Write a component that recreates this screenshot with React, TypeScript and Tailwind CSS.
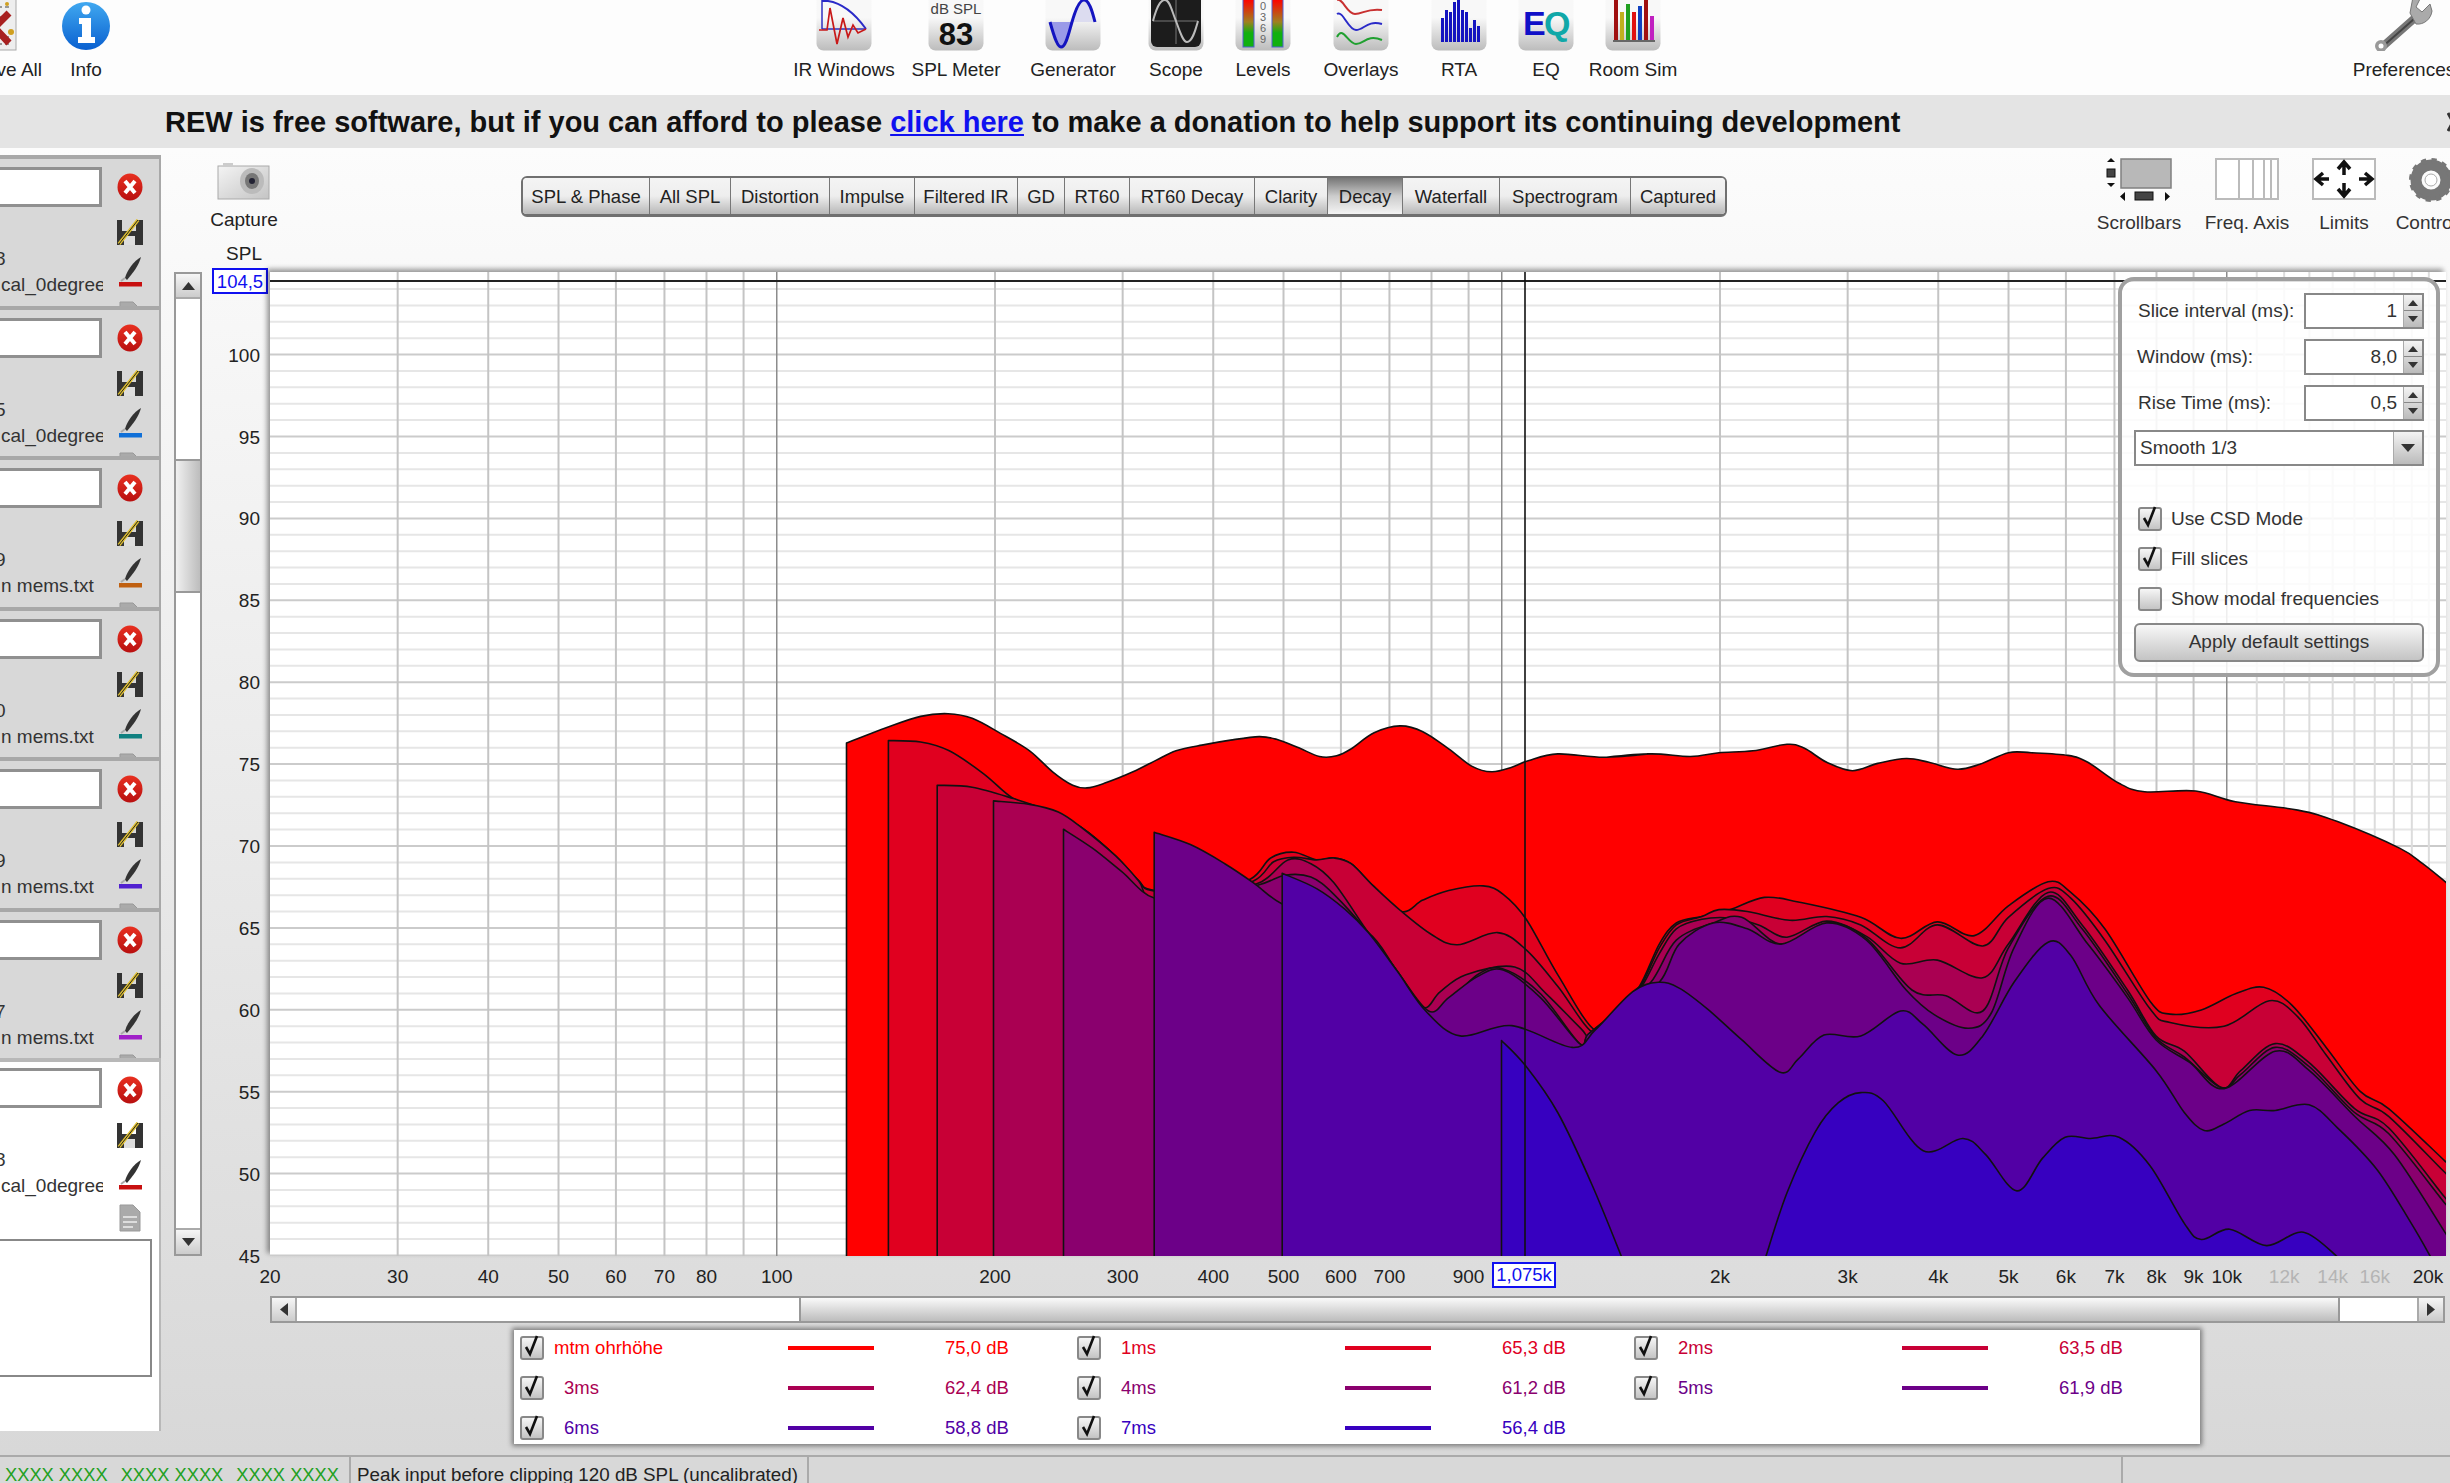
import React from "react";

type P = [number, number];
const a = (l: number[]): P[] => { const r: P[] = []; for (let i = 0; i < l.length; i += 2) r.push([800 + l[i] / 1.742, 680 + l[i + 1] / 2.613]); return r; };
const b = (l: number[]): P[] => { const r: P[] = []; for (let i = 0; i < l.length; i += 2) r.push([1560 + l[i] / 1.762, 680 + l[i + 1] / 2.613]); return r; };
const BOTTOM = 1258;
function smooth(p: P[]) {
  let d = "";
  for (let i = 0; i < p.length - 1; i++) {
    const p0 = p[Math.max(i - 1, 0)], p1 = p[i], p2 = p[i + 1], p3 = p[Math.min(i + 2, p.length - 1)];
    const c1x = p1[0] + (p2[0] - p0[0]) / 6, c1y = p1[1] + (p2[1] - p0[1]) / 6;
    const c2x = p2[0] - (p3[0] - p1[0]) / 6, c2y = p2[1] - (p3[1] - p1[1]) / 6;
    d += `C${c1x.toFixed(1)} ${c1y.toFixed(1)} ${c2x.toFixed(1)} ${c2y.toFixed(1)} ${p2[0].toFixed(1)} ${p2[1].toFixed(1)}`;
  }
  return d;
}
function area(p: P[]) {
  return `M${p[0][0].toFixed(1)} ${BOTTOM}L${p[0][0].toFixed(1)} ${p[0][1].toFixed(1)}${smooth(p)}L${p[p.length - 1][0].toFixed(1)} ${BOTTOM}Z`;
}

const layers: { c: string; p: P[][] }[] = [
  { c: "#ff0000", p: [[...a([81,165,150,125,210,95,258,88,300,100,350,140,400,185,440,240,475,275,500,282,530,270,580,240,620,210,655,185,700,170,750,157,800,148,830,155,870,178,905,200,935,198,960,180,1000,138,1045,120,1085,135,1130,180,1170,225,1205,240,1240,228,1270,210,1320,193,1400,202,1480,193]), ...b([80,202,160,193,230,200,280,190,340,185,400,168,430,178,470,215,515,237,560,218,610,205,650,215,700,233,740,220,790,190,830,190,895,197,930,215,985,270,1030,292,1120,290,1190,318,1300,340,1370,370,1480,440,1520,480,1558,525,1570,540])]] },
  { c: "#e0001f", p: [[...a([154,158,210,162,260,185,320,245,372,310,430,340,490,385,550,460,590,525,612,548,700,560,785,520,820,465,860,450,900,470,930,465,960,480,1000,540,1048,605,1085,575,1130,550,1190,538,1225,560,1265,625,1320,770,1385,915]), ...b([100,860,140,800,175,690,205,635,250,618,300,600,360,568,420,580,530,620,600,675,665,632,730,668,790,590,860,527,900,555,960,650,1040,840,1075,873,1130,862,1190,820,1240,803,1290,850,1350,960,1410,1075,1460,1120,1558,1255,1570,1272])]] },
  { c: "#c80036", p: [[...a([239,275,300,280,372,310,430,340,490,385,550,460,590,525,612,550,700,560,790,525,825,475,860,463,900,470,930,465,960,480,1000,540,1048,605,1100,665,1145,692,1215,660,1265,705,1320,800,1385,925]), ...b([100,860,140,805,175,700,205,640,250,618,280,600,330,605,405,628,470,618,530,640,600,700,665,640,745,695,790,620,860,545,900,570,960,680,1040,860,1075,895,1170,905,1250,838,1300,880,1350,980,1410,1095,1460,1140,1558,1285,1570,1300])]] },
  { c: "#aa0052", p: [[...a([337,316,400,325,450,345,490,385,550,460,590,525,612,570,700,570,800,530,850,470,890,480,930,530,990,660,1040,760,1085,855,1115,815,1160,770,1245,750,1300,820,1360,910,1378,930]), ...b([100,865,140,810,175,715,205,650,250,625,300,622,350,640,400,672,470,630,540,670,600,740,665,732,745,778,790,690,860,555,920,640,1000,810,1050,930,1100,970,1165,1065,1200,1020,1260,950,1320,1000,1400,1120,1460,1170,1558,1350,1570,1370])]] },
  { c: "#8a006e", p: [[...a([459,390,510,440,560,500,617,570,700,570,800,535,845,510,890,515,930,560,990,660,1040,760,1090,865,1120,855,1180,770,1225,755,1290,820,1358,950]), ...b([50,925,100,865,160,790,205,680,270,635,320,620,390,690,470,635,540,675,620,810,680,825,745,865,790,700,860,565,920,650,1000,820,1050,935,1100,985,1165,1065,1200,1030,1260,960,1320,1010,1400,1130,1460,1185,1558,1365,1570,1385])]] },
  { c: "#6c0088", p: [[...a([617,398,680,430,740,480,790,530,840,585,900,600,990,660,1040,760,1095,865,1130,830,1180,775,1225,758,1290,830,1358,950]), ...b([50,925,100,870,175,790,210,690,270,635,330,650,390,690,470,635,540,680,610,810,660,875,720,910,760,870,800,700,860,570,930,690,1000,830,1050,940,1110,1000,1170,1068,1260,970,1320,1020,1400,1140,1470,1240,1558,1440,1570,1470])]] },
  { c: "#5200a5", p: [[...a([840,505,900,545,950,600,990,660,1040,760,1090,865,1150,930,1240,903,1345,960,1385,915,1450,815,1495,790]), ...b([210,805,260,860,320,940,388,1025,420,990,465,928,530,930,600,865,640,900,700,980,745,930,800,790,860,685,900,720,950,850,1050,1020,1100,1130,1135,1177,1170,1160,1215,1125,1260,1125,1320,1110,1370,1170,1440,1280,1500,1420,1535,1510])]] },
  { c: "#3700c0", p: [a([1222,942,1265,1010,1320,1130,1380,1320,1432,1510]), b([362,1510,400,1340,450,1180,490,1105,530,1078,570,1100,640,1230,710,1198,750,1240,805,1335,850,1250,890,1195,935,1198,985,1195,1040,1270,1100,1420,1130,1462,1180,1435,1245,1478,1310,1443,1372,1510])] },
];

const X0 = 270, PW = 725;
const xf = (f: number) => X0 + PW * Math.log10(f / 20);
const yd = (d: number) => 1255.5 - (d - 45) * 16.38;
const freqs = [30,40,50,60,70,80,90,100,200,300,400,500,600,700,800,900,1000,2000,3000,4000,5000,6000,7000,8000,9000,10000,11000,12000,13000,14000,15000,16000,17000,18000,19000];
const xlabels: [number, string, boolean?][] = [[20,"20"],[30,"30"],[40,"40"],[50,"50"],[60,"60"],[70,"70"],[80,"80"],[100,"100"],[200,"200"],[300,"300"],[400,"400"],[500,"500"],[600,"600"],[700,"700"],[900,"900"],[2000,"2k"],[3000,"3k"],[4000,"4k"],[5000,"5k"],[6000,"6k"],[7000,"7k"],[8000,"8k"],[9000,"9k"],[10000,"10k"],[12000,"12k",true],[14000,"14k",true],[16000,"16k",true],[20000,"20k"]];

function Tile({ children, dark }: { children?: React.ReactNode; dark?: boolean }) {
  return (
    <svg width="56" height="60" viewBox="0 -9 56 60" className="shrink-0">
      <rect x="0.5" y="-9" width="55" height="59.5" rx="7" fill="url(#tile)" />
      {dark && <rect x="3" y="-9" width="50" height="56" rx="6" fill="#1c1c1c" />}
      {children}
    </svg>
  );
}

const IR = <Tile><path d="M6 0V29M6 29H50" fill="none" stroke="#3030c0" strokeWidth="1.5" /><path d="M6 1H12Q32 4 50 29" fill="none" stroke="#2a2ac8" strokeWidth="2" /><path d="M3 30H11L14 8L21 44L27 18L32 37L37 25L42 33L50 29" fill="none" stroke="#c81818" strokeWidth="1.7" /></Tile>;
const SPL = <Tile><text x="28" y="14" textAnchor="middle" fontSize="15" fill="#444">dB SPL</text><text x="28" y="45" textAnchor="middle" fontSize="31" fontWeight="700" fill="#111">83</text></Tile>;
const GEN = <Tile><path d="M5 22H27L22 36L16 47L10 36Z" fill="#9a9ae8" /><path d="M27 22H50L45 5L39 0L33 5Z" fill="#dcdcf0" /><path d="M5 22C10 40 13 47 16 47C21 47 24 32 27 22C31 8 35 0 39 0C44 0 47 10 50 22" fill="none" stroke="#1414c0" strokeWidth="3" /></Tile>;
const SCOPE = <Tile dark><path d="M5 21H50M28 0V44" stroke="#777" strokeWidth="1" /><path d="M5 21C10 2 14 0 17 0C22 0 24 12 28 21C32 32 35 42 39 42C44 42 47 32 50 21" fill="none" stroke="#bbb" strokeWidth="2" /></Tile>;
const LEVELS = <Tile>
  <rect x="8" y="-9" width="11" height="56" fill="url(#lvl)" stroke="#5060d0" /><rect x="37" y="-9" width="11" height="56" fill="url(#lvl)" stroke="#5060d0" />
  <text x="28" y="10" textAnchor="middle" fontSize="11" fill="#666">0</text><text x="28" y="21" textAnchor="middle" fontSize="11" fill="#666">3</text><text x="28" y="32" textAnchor="middle" fontSize="11" fill="#666">6</text><text x="28" y="43" textAnchor="middle" fontSize="11" fill="#666">9</text>
</Tile>;
const OVER = <Tile>
  <path d="M4 0C10 -2 14 14 22 14C30 14 34 8 49 10" fill="none" stroke="#c83030" strokeWidth="2" />
  <path d="M4 14C10 10 15 30 23 30C31 30 34 20 49 24" fill="none" stroke="#2a2ac8" strokeWidth="2" />
  <path d="M4 37C10 25 15 44 23 44C31 44 34 34 49 40" fill="none" stroke="#20a030" strokeWidth="2" />
</Tile>;
const RTA = <Tile>{[[10,24],[14,32],[18,30],[22,40],[26,42],[30,32],[34,30],[38,14],[42,22],[46,16]].map(([x,h],i)=><rect key={i} x={x} y={42-h} width="3" height={h} fill="#1414c0" />)}</Tile>;
const EQ = <Tile><text x="5" y="35" fontSize="34" fontWeight="700" fill="#1010c8">E</text><text x="26" y="35" fontSize="34" fontWeight="700" fill="#10a8a8">Q</text></Tile>;
const ROOM = <Tile>
  {[[9,42,"#a01010"],[15,28,"#c0b020"],[21,36,"#20a020"],[27,28,"#e01010"],[33,34,"#1040c0"],[39,40,"#a01010"],[45,24,"#c020c0"]].map(([x,h,c],i)=><rect key={i} x={x as number} y={40-(h as number)} width="4" height={h as number} fill={c as string} />)}
  <rect x="8" y="40" width="42" height="2" fill="#666" />
</Tile>;
const INFO = <svg width="50" height="50" viewBox="0 0 50 50" className="shrink-0"><ellipse cx="25" cy="25" rx="24" ry="24" fill="url(#info)" /><circle cx="25" cy="9" r="4.5" fill="#fff" /><path d="M18 17H30V36H34V42H17V36H21V23H18Z" fill="#fff" /></svg>;
const REMOVE = <svg width="46" height="52" viewBox="0 0 46 52" className="shrink-0"><rect x="1" y="0" width="44" height="51" fill="#eee" stroke="#aaa" /><path d="M6 8H40M6 18H40M6 38H40M6 45H40" stroke="#999" strokeWidth="2" strokeDasharray="4 3" /><circle cx="40" cy="33" r="3" fill="#d0a020" /><circle cx="36" cy="5" r="2" fill="#d0a020" /><path d="M8 12L38 44M38 14L8 44" stroke="#a82020" strokeWidth="7" /></svg>;
const WRENCH = <svg width="60" height="52" viewBox="0 0 60 52" className="shrink-0"><path d="M7 49L42 18" stroke="#777" strokeWidth="8" strokeLinecap="round" /><path d="M7 49L40 20" stroke="#444" strokeWidth="2" /><circle cx="7" cy="47" r="6" fill="#999" /><circle cx="7" cy="47" r="2.5" fill="#fff" /><path d="M36 14L39 -2H47L42 8L48 13L56 5L58 12C57 20 50 26 42 25Z" fill="#aaa" stroke="#777" /></svg>;

const SCROLLICON = <svg width="66" height="44" viewBox="0 0 66 44" className="shrink-0"><rect x="15" y="1" width="50" height="29" fill="#b8b8b8" stroke="#808080" strokeWidth="1.5" /><path d="M1 4H9L5 0Z M1 25H9L5 29Z" fill="#111" /><rect x="1" y="11" width="8" height="8" fill="#444" stroke="#111" /><path d="M19 34V43L14 38.5Z M59 34V43L64 38.5Z" fill="#111" /><rect x="29" y="34" width="18" height="8" fill="#444" stroke="#111" /></svg>;
const FREQICON = <svg width="64" height="42" viewBox="0 0 64 42" className="shrink-0"><rect x="1" y="1" width="62" height="40" fill="#fff" stroke="#bbb" strokeWidth="2" /><path d="M24 1V41M38 1V41M49 1V41M56 1V41" stroke="#bbb" strokeWidth="2" /></svg>;
const LIMICON = <svg width="64" height="42" viewBox="0 0 64 42" className="shrink-0"><rect x="1" y="1" width="62" height="40" fill="#fff" stroke="#bbb" strokeWidth="2" /><g stroke="#111" strokeWidth="3.5" fill="none"><path d="M32 5V17M26 11L32 4L38 11" /><path d="M32 25V37M26 31L32 38L38 31" /><path d="M5 21H17M11 15L4 21L11 27" /><path d="M47 21H59M53 15L60 21L53 27" /></g></svg>;
const GEAR = <svg width="44" height="44" viewBox="0 0 44 44" className="shrink-0"><circle cx="22" cy="22" r="15" fill="none" stroke="#777" strokeWidth="11" /><circle cx="22" cy="22" r="19.5" fill="none" stroke="#777" strokeWidth="5" strokeDasharray="5 5.2" /><circle cx="22" cy="22" r="6" fill="#fff" stroke="#aaa" /></svg>;
const CAMERA = <svg width="54" height="38" viewBox="0 0 54 38" className="shrink-0"><rect x="1" y="4" width="51" height="33" fill="url(#cam)" stroke="#aaa" /><rect x="6" y="1" width="10" height="4" fill="#ccc" /><ellipse cx="35" cy="19" rx="12" ry="13" fill="#bbb" /><ellipse cx="35" cy="19" rx="7" ry="8" fill="#777" /><circle cx="35" cy="19" r="3" fill="#223" /></svg>;

function ToolItem({ w, icon, label }: { w: string; icon: React.ReactNode; label: string }) {
  return (
    <div className={`flex flex-col items-center shrink-0 ${w}`}>
      <div className="h-[51px] overflow-hidden flex items-end justify-center">{icon}</div>
      <div className="text-[19px] leading-[22px] mt-[8px] whitespace-nowrap text-[#222]">{label}</div>
    </div>
  );
}

function CloseIcon() {
  return <svg width="26" height="28" viewBox="0 0 26 28" className="shrink-0"><ellipse cx="13" cy="14" rx="12.5" ry="13.5" fill="url(#close)" /><path d="M8 8L18 20M18 8L8 20" stroke="#fff" strokeWidth="4" /></svg>;
}
function SaveIcon() {
  return <svg width="28" height="27" viewBox="0 0 28 27" className="shrink-0"><path d="M1 1H6V12H20V1H27V26H1Z" fill="#333" /><rect x="8" y="17" width="11" height="9" fill="#ddd" /><path d="M3 25L22 1" stroke="#e0c030" strokeWidth="3.5" /><path d="M3 25L22 1" stroke="#222" strokeWidth="1" /></svg>;
}
function PenIcon({ c }: { c: string }) {
  return <svg width="26" height="30" viewBox="0 0 26 30" className="shrink-0"><path d="M8 21C10 13 17 4 24 0C22 8 16 16 10 23Z" fill="#333" /><path d="M8 21L4 24" stroke="#aaa" strokeWidth="2" /><rect x="2" y="25" width="23" height="4.5" fill={c} /></svg>;
}

function Panel({ digit, name, c, last }: { digit: string; name: string; c: string; last?: boolean }) {
  return (
    <div className={`overflow-hidden flex border-r-2 border-t-[4px] shrink-0 ${last ? "bg-white border-[#b8b8b8] h-[373px]" : "h-[150.5px] bg-[#d8d8d8] border-[#a8a8a8]"}`}>
      <div className="w-[116px] shrink-0 flex flex-col">
        <div className={`h-[40px] w-[102px] shrink-0 bg-white border-[3px] border-l-0 border-[#909090] ${last ? "mt-[6px]" : "mt-[8px]"}`} />
        <div className="w-[103px] shrink-0 overflow-hidden text-[19px] leading-[24px] text-[#333] whitespace-nowrap mt-[40px]">
          <div className="-ml-[5px]">{digit}</div>
          <div className="ml-[1px] mt-[2px]">{name}</div>
        </div>
        {last && <div className="h-[138px] w-[152px] mt-[41px] bg-white border-2 border-l-0 border-[#888] shrink-0" />}
      </div>
      <div className="w-[28px] shrink-0 flex flex-col items-center pt-[14px]">
        <CloseIcon />
        <div className="mt-[18px] h-[28px] shrink-0"><SaveIcon /></div>
        <div className="mt-[10px] h-[30px] shrink-0"><PenIcon c={c} /></div>
        <svg width="24" height="28" viewBox="0 0 24 28" className="mt-[14px] shrink-0"><path d="M2 1H15L22 8V27H2Z" fill="#aaa" stroke="#999" /><path d="M5 13H19M5 18H19M5 23H15" stroke="#eee" strokeWidth="1.5" /></svg>
      </div>
    </div>
  );
}

function Spin({ v }: { v: string }) {
  return (
    <div className="w-[120px] h-[36px] bg-white border-2 border-[#888] flex">
      <div className="flex-1 text-right pr-[6px] leading-[32px] text-[19px] text-[#333]">{v}</div>
      <div className="w-[19px] flex flex-col border-l border-[#aaa] bg-linear-to-b from-[#f4f4f4] to-[#bbb]">
        <div className="h-1/2 flex items-center justify-center border-b border-[#888]"><svg width="10" height="6"><path d="M0 6H10L5 0Z" fill="#333" /></svg></div>
        <div className="h-1/2 flex items-center justify-center"><svg width="10" height="6"><path d="M0 0H10L5 6Z" fill="#333" /></svg></div>
      </div>
    </div>
  );
}

function Check({ on }: { on?: boolean }) {
  return (
    <div className="w-[24px] h-[24px] shrink-0 rounded-[3px] border-2 border-[#888] bg-linear-to-b from-[#f6f6f6] to-[#c4c4c4] relative">
      {on && <svg width="24" height="24" viewBox="0 0 24 24" className="absolute -left-[2px] -top-[4px]"><path d="M6 13L10 20L17 2" fill="none" stroke="#111" strokeWidth="2.6" /></svg>}
    </div>
  );
}

function CheckRow({ on, label }: { on?: boolean; label: string }) {
  return <div className="h-[40px] flex items-center gap-[9px] ml-[4px]"><Check on={on} /><span className="text-[19px] text-[#333]">{label}</span></div>;
}

function LegendItem({ name, val, c, indent = true }: { name: string; val: string; c: string; indent?: boolean }) {
  return (
    <div className="flex items-center pl-[6px] h-[40px]">
      <Check on />
      <div className={`w-[234px] ml-[10px] text-[18.5px] ${indent ? "pl-[10px]" : ""}`} style={{ color: c }}>{name}</div>
      <div className="w-[86px] h-[4px]" style={{ background: c }} />
      <div className="ml-[71px] text-[18.5px]" style={{ color: c }}>{val}</div>
    </div>
  );
}

const tabs: [string, string][] = [["SPL & Phase","w-[127px]"],["All SPL","w-[81px]"],["Distortion","w-[99px]"],["Impulse","w-[85px]"],["Filtered IR","w-[103px]"],["GD","w-[47px]"],["RT60","w-[65px]"],["RT60 Decay","w-[125px]"],["Clarity","w-[73px]"],["Decay","w-[75px]"],["Waterfall","w-[97px]"],["Spectrogram","w-[131px]"],["Captured","w-[94px]"]];

export default function App() {
  return (
    <div className="w-[2450px] h-[1483px] overflow-hidden flex flex-col font-['Liberation_Sans',Arial,sans-serif] bg-[#fcfcfc] relative">
      <svg width="0" height="0" className="absolute">
        <defs>
          <linearGradient id="tile" x1="0" y1="0" x2="0" y2="1"><stop offset="0.45" stopColor="#f8f8f8" /><stop offset="1" stopColor="#bcbcbc" /></linearGradient>
          <linearGradient id="lvl" x1="0" y1="0" x2="0" y2="1"><stop offset="0.15" stopColor="#ff0000" /><stop offset="0.55" stopColor="#a08020" /><stop offset="0.75" stopColor="#10b010" /><stop offset="1" stopColor="#10b010" /></linearGradient>
          <linearGradient id="info" x1="0" y1="0" x2="0" y2="1"><stop offset="0" stopColor="#40a8f0" /><stop offset="1" stopColor="#0a60d0" /></linearGradient>
          <linearGradient id="close" x1="0" y1="0" x2="0" y2="1"><stop offset="0" stopColor="#e83020" /><stop offset="1" stopColor="#b81010" /></linearGradient>
          <linearGradient id="cam" x1="0" y1="0" x2="1" y2="1"><stop offset="0" stopColor="#f4f4f4" /><stop offset="1" stopColor="#c4c4c4" /></linearGradient>
        </defs>
      </svg>

      {/* toolbar */}
      <div className="h-[95px] shrink-0 flex bg-[#fdfdfd] -ml-[60px] overflow-hidden">
        <ToolItem w="w-[108px]" icon={REMOVE} label="Remove All" />
        <ToolItem w="w-[76px]" icon={INFO} label="Info" />
        <ToolItem w="w-[112px] ml-[664px]" icon={IR} label="IR Windows" />
        <ToolItem w="w-[112px]" icon={SPL} label="SPL Meter" />
        <ToolItem w="w-[122px]" icon={GEN} label="Generator" />
        <ToolItem w="w-[84px]" icon={SCOPE} label="Scope" />
        <ToolItem w="w-[90px]" icon={LEVELS} label="Levels" />
        <ToolItem w="w-[106px]" icon={OVER} label="Overlays" />
        <ToolItem w="w-[90px]" icon={RTA} label="RTA" />
        <ToolItem w="w-[84px]" icon={EQ} label="EQ" />
        <ToolItem w="w-[90px]" icon={ROOM} label="Room Sim" />
        <ToolItem w="w-[120px] ml-[666px]" icon={WRENCH} label="Preferences" />
      </div>

      {/* banner */}
      <div className="h-[53px] shrink-0 bg-[#e4e4e4] flex items-center pl-[165px] pt-[2px] text-[29px] font-bold text-[#111] whitespace-nowrap relative">
        <span>REW is free software, but if you can afford to please&nbsp;</span>
        <span className="text-[#1010f0] underline">click here</span>
        <span>&nbsp;to make a donation to help support its continuing development</span>
        <svg width="12" height="22" viewBox="0 0 12 22" className="absolute left-[2447px] top-[16px]"><path d="M1 2L11 20M11 2L1 20" stroke="#333" strokeWidth="3" /></svg>
      </div>

      {/* main */}
      <div className="flex-1 flex min-h-0 bg-linear-to-b from-[#fcfcfc] to-[#d8d8d8]">
        <div className="w-[161px] shrink-0 pt-[7px] flex flex-col">
          <Panel digit="8" name="cal_0degree" c="#c81010" />
          <Panel digit="5" name="cal_0degree" c="#1070d8" />
          <Panel digit="9" name="n mems.txt" c="#c06010" />
          <Panel digit="0" name="n mems.txt" c="#108080" />
          <Panel digit="9" name="n mems.txt" c="#5020d0" />
          <Panel digit="7" name="n mems.txt" c="#a020c8" />
          <Panel digit="8" name="cal_0degree" c="#c81010" last />
        </div>

        <div className="flex-1 min-w-0 flex flex-col">
          {/* top row */}
          <div className="h-[124px] shrink-0 flex">
            <div className="w-[90px] ml-[38px] shrink-0 flex flex-col items-center pt-[14px] text-[19px] leading-[22px] text-[#222]">
              <div className="h-[36px]">{CAMERA}</div>
              <div className="mt-[11px]">Capture</div>
              <div className="mt-[12px]">SPL</div>
            </div>
            <div className="ml-[232px] mt-[28px] h-[41px] flex shrink-0 rounded-[6px] border-2 border-[#707070] border-b-[3px] overflow-hidden">
              {tabs.map(([t, w]) => (
                <div key={t} className={`${w} shrink-0 flex items-center justify-center pt-[2px] text-[18.5px] whitespace-nowrap text-[#222] border-r border-[#777] last:border-r-0 ${t === "Decay" ? "bg-linear-to-b from-[#777] via-[#ccc] to-[#f4f4f4]" : "bg-linear-to-b from-[#f4f4f4] via-[#eee] to-[#b8b8b8]"}`}>{t}</div>
              ))}
            </div>
            <div className="ml-[358px] flex shrink-0 text-[19px] leading-[22px] text-[#333]">
              <div className="w-[108px] flex flex-col items-center pt-[10px]"><div className="h-[43px]">{SCROLLICON}</div><div className="mt-[11px]">Scrollbars</div></div>
              <div className="w-[108px] flex flex-col items-center pt-[10px]"><div className="h-[43px]">{FREQICON}</div><div className="mt-[11px]">Freq. Axis</div></div>
              <div className="w-[86px] flex flex-col items-center pt-[10px]"><div className="h-[43px]">{LIMICON}</div><div className="mt-[11px]">Limits</div></div>
              <div className="w-[88px] flex flex-col items-center pt-[10px]"><div className="h-[43px]">{GEAR}</div><div className="mt-[11px]">Controls</div></div>
            </div>
          </div>

          {/* plot row */}
          <div className="h-[984px] shrink-0 flex">
            <div className="w-[28px] ml-[13px] shrink-0 flex flex-col border-2 border-[#999] bg-white">
              <div className="h-[25px] shrink-0 border-b-2 border-[#aaa] bg-linear-to-b from-[#f6f6f6] to-[#ccc] flex items-center justify-center"><svg width="13" height="8"><path d="M0 8H13L6.5 0Z" fill="#333" /></svg></div>
              <div className="h-[160px] shrink-0" />
              <div className="h-[134px] shrink-0 border-y-2 border-[#999] bg-linear-to-r from-[#f0f0f0] to-[#bdbdbd]" />
              <div className="flex-1" />
              <div className="h-[26px] shrink-0 border-t-2 border-[#aaa] bg-linear-to-b from-[#f6f6f6] to-[#ccc] flex items-center justify-center"><svg width="13" height="8"><path d="M0 0H13L6.5 8Z" fill="#333" /></svg></div>
            </div>
            <div className="w-[68px] shrink-0 relative text-[19px] text-[#222]">
              {[100,95,90,85,80,75,70,65,60,55,50,45].map((d) => (
                <div key={d} className="absolute right-[10px] leading-[22px]" style={{ top: yd(d) - 272 - 10 }}>{d}</div>
              ))}
              <div className="absolute left-[10px] -top-[4px] w-[56px] h-[26px] border-2 border-[#1010f0] bg-white text-[#1010f0] text-[18.5px] leading-[23px] text-center">104,5</div>
            </div>
            <div className="w-[2176px] shrink-0 relative shadow-[-3px_-3px_5px_rgba(0,0,0,0.4)]">
              <svg width="2176" height="984" viewBox="270 272 2176 984" className="block">
                <rect x="270" y="272" width="2176" height="984" fill="#fff" />
                {Array.from({ length: 60 }, (_, i) => 45 + i).map((d) => (
                  <line key={d} x1="270" x2="2446" y1={yd(d)} y2={yd(d)} stroke={d % 5 === 0 ? "#cbcbcb" : "#e6e6e6"} strokeWidth="2" />
                ))}
                {freqs.map((f) => (
                  <line key={f} x1={xf(f)} x2={xf(f)} y1="272" y2="1256" stroke={f === 100 || f === 1000 || f === 10000 ? "#8c8c8c" : f > 10000 ? "#dcdcdc" : "#c4c4c4"} strokeWidth={f === 100 || f === 1000 || f === 10000 ? 1.5 : 2} />
                ))}
                <line x1="270" x2="2446" y1="281" y2="281" stroke="#222" strokeWidth="2" />
                {layers.map((l, i) => l.p.map((p, j) => (
                  <path key={`${i}-${j}`} d={area(p)} fill={l.c} stroke="#111" strokeWidth="1.6" strokeLinejoin="round" />
                )))}
                <line x1="1525" x2="1525" y1="272" y2="1256" stroke="#111" strokeWidth="1.6" />
              </svg>
              {/* decay controls */}
              <div className="absolute left-[1848px] top-[5px] w-[322px] h-[400px] border-4 border-[#a0a0a0] rounded-[16px] bg-white/85 pt-[12px] px-[12px] text-[19px] text-[#333]">
                <div className="flex items-center justify-between h-[36px]"><span className="ml-[4px]">Slice interval (ms):</span><Spin v="1" /></div>
                <div className="flex items-center justify-between h-[36px] mt-[10px]"><span className="ml-[3px]">Window (ms):</span><Spin v="8,0" /></div>
                <div className="flex items-center justify-between h-[36px] mt-[10px]"><span className="ml-[4px]">Rise Time (ms):</span><Spin v="0,5" /></div>
                <div className="h-[36px] mt-[9px] bg-white border-2 border-[#888] flex">
                  <div className="flex-1 pl-[4px] leading-[32px]">Smooth 1/3</div>
                  <div className="w-[29px] border-l border-[#aaa] bg-linear-to-b from-[#f4f4f4] to-[#bbb] flex items-center justify-center"><svg width="14" height="8"><path d="M0 0H14L7 8Z" fill="#333" /></svg></div>
                </div>
                <div className="mt-[33px]">
                  <CheckRow on label="Use CSD Mode" />
                  <CheckRow on label="Fill slices" />
                  <CheckRow label="Show modal frequencies" />
                </div>
                <div className="mt-[4px] h-[39px] rounded-[6px] border-2 border-[#888] bg-linear-to-b from-[#f8f8f8] to-[#c4c4c4] flex items-center justify-center">Apply default settings</div>
              </div>
            </div>
          </div>

          {/* x axis */}
          <div className="h-[40px] shrink-0 relative ml-[109px] text-[19px] text-[#222]">
            {xlabels.map(([f, s, g]) => (
              <div key={s} className={`absolute top-[10px] leading-[22px] -translate-x-1/2 whitespace-nowrap ${g ? "text-[#b4b4b4]" : ""}`} style={{ left: Math.min(xf(f), 2428) - 270 }}>{s}</div>
            ))}
            <div className="absolute left-[1222px] top-[6px] w-[64px] h-[26px] border-2 border-[#1010f0] bg-white text-[#1010f0] text-[18.5px] leading-[22px] text-center whitespace-nowrap overflow-hidden">1,075k</div>
          </div>

          {/* h scroll */}
          <div className="h-[27px] w-[2175px] ml-[109px] shrink-0 flex border-2 border-[#999] bg-white">
            <div className="w-[25px] shrink-0 border-r-2 border-[#aaa] bg-linear-to-b from-[#f6f6f6] to-[#ccc] flex items-center justify-center"><svg width="8" height="13"><path d="M8 0V13L0 6.5Z" fill="#333" /></svg></div>
            <div className="w-[502px] shrink-0" />
            <div className="w-[1541px] shrink-0 border-x-2 border-[#999] bg-linear-to-b from-[#fafafa] to-[#bdbdbd]" />
            <div className="flex-1" />
            <div className="w-[26px] shrink-0 border-l-2 border-[#aaa] bg-linear-to-b from-[#f6f6f6] to-[#ccc] flex items-center justify-center"><svg width="8" height="13"><path d="M0 0V13L8 6.5Z" fill="#333" /></svg></div>
          </div>

          {/* legend */}
          <div className="mt-[7px] ml-[353px] w-[1686px] h-[114px] shrink-0 bg-white shadow-[0_0_5px_2px_rgba(0,0,0,0.45)]">
            <div className="-mt-[2px] grid grid-cols-[557px_557px_1fr]">
              <LegendItem name="mtm ohrhöhe" val="75,0 dB" c="#ff0000" indent={false} />
              <LegendItem name="1ms" val="65,3 dB" c="#e0001f" />
              <LegendItem name="2ms" val="63,5 dB" c="#c80036" />
              <LegendItem name="3ms" val="62,4 dB" c="#aa0052" />
              <LegendItem name="4ms" val="61,2 dB" c="#8a006e" />
              <LegendItem name="5ms" val="61,9 dB" c="#6c0088" />
              <LegendItem name="6ms" val="58,8 dB" c="#5200a5" />
              <LegendItem name="7ms" val="56,4 dB" c="#3700c0" />
            </div>
          </div>
        </div>
      </div>

      {/* status */}
      <div className="h-[28px] shrink-0 bg-[#d8d8d8] border-t-2 border-[#aaa] flex text-[19px] whitespace-nowrap overflow-hidden">
        <div className="w-[351px] shrink-0 border-r-2 border-[#aaa] pl-[5px] flex gap-[13px] text-[#22a022] text-[18.3px] leading-[28px] pt-[4px]">
          <span>XXXX XXXX</span><span>XXXX XXXX</span><span>XXXX XXXX</span>
        </div>
        <div className="w-[458px] shrink-0 border-r-2 border-[#aaa] pl-[6px] pt-[4px] leading-[28px] text-[#222] text-[18.8px]">Peak input before clipping 120 dB SPL (uncalibrated)</div>
        <div className="w-[1314px] shrink-0 border-r-2 border-[#aaa]" />
      </div>
    </div>
  );
}
